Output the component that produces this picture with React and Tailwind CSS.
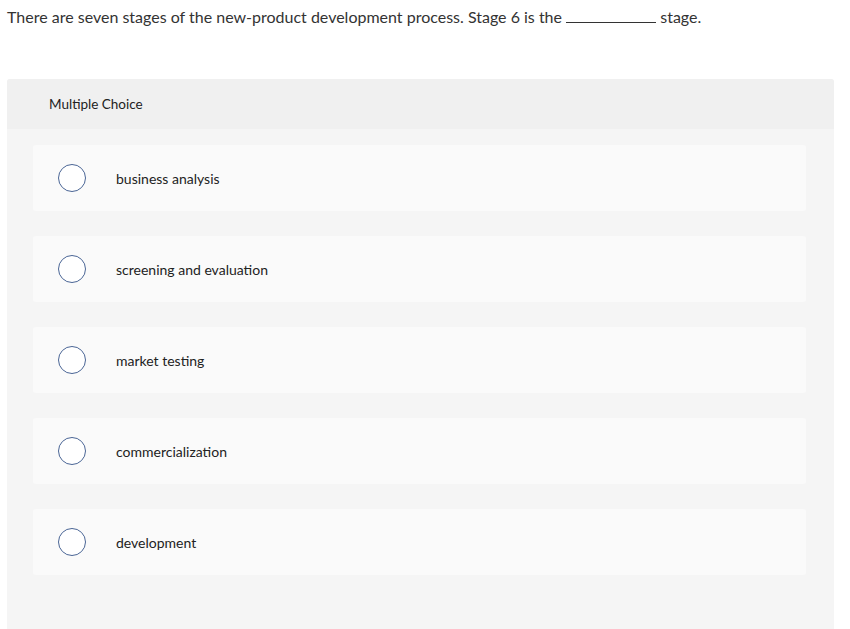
import React from "react";

const options = [
  "business analysis",
  "screening and evaluation",
  "market testing",
  "commercialization",
  "development",
];

export default function App() {
  return (
    <div className="min-h-screen bg-white font-['Lato',sans-serif] text-[#333]">
      <div className="pl-[7px] pr-[16px] pt-[7px]">
        <p className="text-[16px] leading-[20px]">
          There are seven stages of the new-product development process. Stage 6 is the{" "}
          <span className="inline-block w-[90px] border-b border-[#333] align-baseline"></span>{" "}
          stage.
        </p>

        <div className="mt-[52px] rounded-t-[3px] bg-[#f5f5f5] pb-[54px]">
          <div className="flex h-[50px] items-center rounded-t-[3px] bg-[#f0f0f0] pl-[42px] text-[13.5px] text-[#222]">
            Multiple Choice
          </div>
          <div className="flex flex-col gap-[25px] pl-[26px] pr-[28px] pt-[16px]">
            {options.map((opt) => (
              <label
                key={opt}
                className="flex h-[66px] cursor-pointer items-center rounded-[3px] bg-[#fafafa] pl-[25px]"
              >
                <span className="h-[28px] w-[28px] shrink-0 rounded-full border border-[#4a6595] bg-white"></span>
                <span className="ml-[30px] text-[14px] text-[#222]">{opt}</span>
              </label>
            ))}
          </div>
        </div>
      </div>
    </div>
  );
}
